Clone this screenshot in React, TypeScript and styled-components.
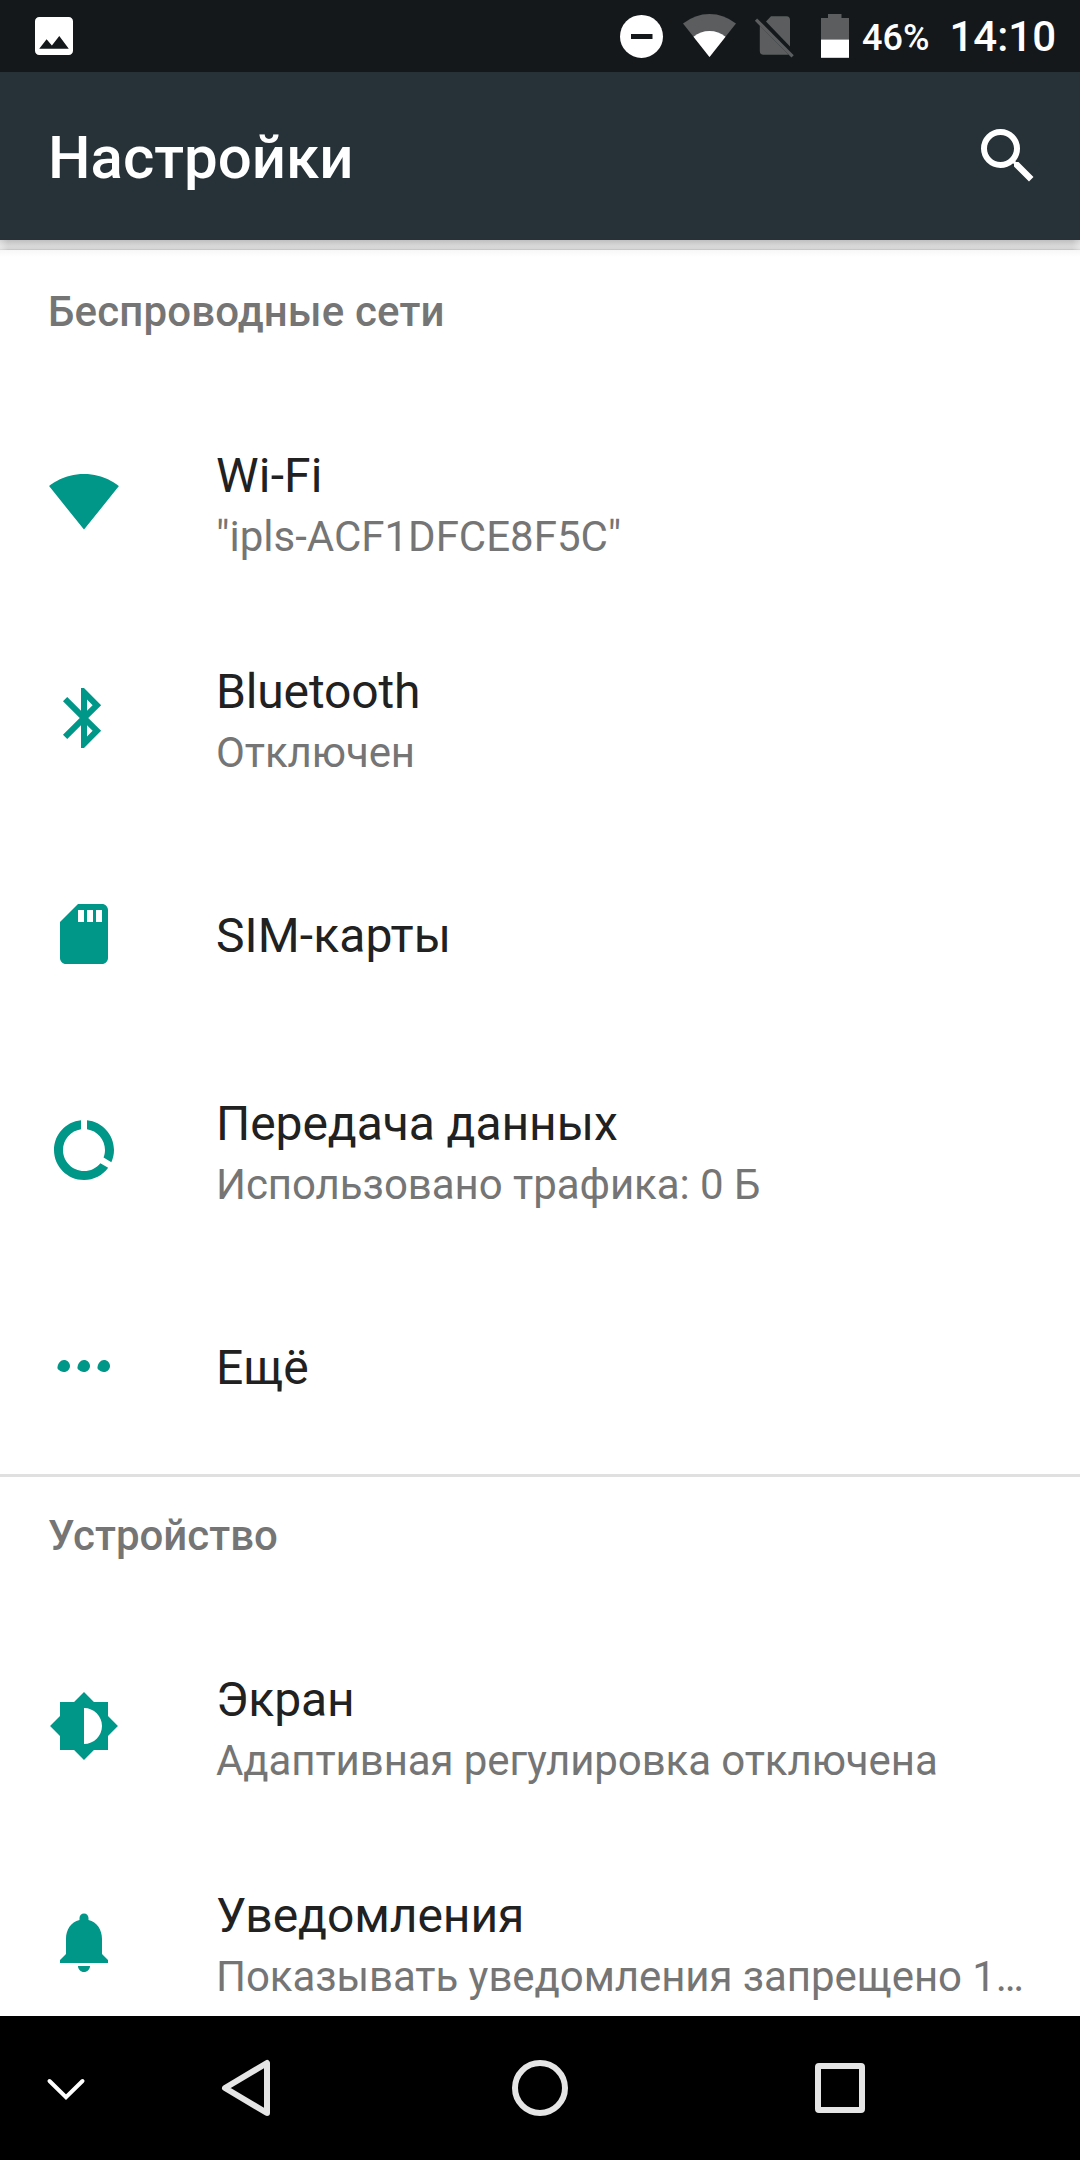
import React from 'react';
import styled, { createGlobalStyle } from 'styled-components';

const GlobalStyle = createGlobalStyle`
  * { box-sizing: border-box; }
  body {
    margin: 0;
    background: #ffffff;
    font-family: Roboto, "Noto Sans", sans-serif;
    -webkit-font-smoothing: antialiased;
  }
  svg { display: block; flex: none; }
  h1, h2, p { margin: 0; font-weight: 400; }
`;

const Screen = styled.div`
  display: flex;
  flex-direction: column;
  width: 1080px;
  height: 2160px;
  overflow: hidden;
  background: #ffffff;
`;

const StatusBar = styled.header`
  display: flex;
  flex: none;
  align-items: center;
  justify-content: space-between;
  height: 72px;
  padding: 0 24px 0 35px;
  background: #14181b;
  color: #ffffff;
`;

const StatusIcons = styled.div`
  display: flex;
  align-items: center;
  height: 72px;
`;

const BatteryLevel = styled.span`
  margin-left: 12px;
  padding-top: 3px;
  font-size: 36px;
  font-weight: 500;
  line-height: 42px;
`;

const Clock = styled.span`
  margin-left: 20px;
  padding-top: 2px;
  font-size: 42px;
  font-weight: 500;
  line-height: 50px;
`;

const Toolbar = styled.div`
  display: flex;
  flex: none;
  align-items: center;
  justify-content: space-between;
  height: 168px;
  padding: 0 36px 0 48px;
  background: #273238;
`;

const ToolbarTitle = styled.h1`
  padding-top: 3px;
  color: #ffffff;
  font-size: 60px;
  font-weight: 500;
  line-height: 70px;
`;

const ShadowStrip = styled.div`
  flex: none;
  height: 10px;
  background:
    linear-gradient(90deg, rgba(255, 255, 255, 0.35), transparent 8px calc(100% - 8px), rgba(255, 255, 255, 0.35)),
    linear-gradient(#c0c0c0, #cdcdcd 30%, #d8d8d8 60%, #d6d6d6 85%, #c0c0c0);
`;

const Content = styled.main`
  flex: 1;
  min-height: 0;
  overflow: hidden;
  background: linear-gradient(#f7f7f7, #ffffff 7px);
`;

const Section = styled.section<{ $divided?: boolean }>`
  box-shadow: ${(p) => (p.$divided ? 'inset 0 3px 0 #e0e0e0' : 'none')};
`;

const SectionTitle = styled.h2<{ $tracking: number }>`
  height: 144px;
  padding: 37px 48px 0;
  color: #757575;
  font-size: 42px;
  font-weight: 500;
  line-height: 49px;
  letter-spacing: ${(p) => p.$tracking}px;
`;

const Row = styled.div`
  display: flex;
  align-items: center;
  height: 216px;
  padding: 0 48px;
`;

const RowText = styled.div<{ $twoLine: boolean }>`
  display: flex;
  flex: 1;
  flex-direction: column;
  gap: 8px;
  min-width: 0;
  margin-left: 96px;
  padding-top: ${(p) => (p.$twoLine ? 5 : 3)}px;
`;

const RowTitle = styled.p<{ $tracking: number }>`
  color: #212121;
  font-size: 48px;
  line-height: 56px;
  letter-spacing: ${(p) => p.$tracking}px;
`;

const RowSummary = styled.p<{ $tracking: number }>`
  overflow: hidden;
  color: #757575;
  font-size: 42px;
  line-height: 49px;
  letter-spacing: ${(p) => p.$tracking}px;
  text-overflow: ellipsis;
  white-space: nowrap;
`;

const NavBar = styled.nav`
  display: flex;
  flex: none;
  align-items: center;
  height: 144px;
  padding-left: 36px;
  background: #000000;
`;

const NavButton = styled.div<{ $gap: number }>`
  display: flex;
  margin-left: ${(p) => p.$gap}px;
`;

const ICONS = {
  wifi: 'M12.01 21.2L23.64 6.7c-.45-.34-4.93-4-11.64-4C5.28 2.7.81 6.36.36 6.7l11.63 14.49.01.01.01-.01z',
  bluetooth:
    'M17.71 7.71L12 2h-1v7.59L6.41 5 5 6.41 10.59 12 5 17.59 6.41 19 11 14.41V22h1l5.71-5.71-4.3-4.29 4.3-4.29zM13 5.83l1.88 1.88L13 9.59V5.83zm1.88 10.46L13 18.17v-3.76l1.88 1.88z',
  sim: 'M18 2h-8L4 8v12c0 1.1.9 2 2 2h12c1.1 0 2-.9 2-2V4c0-1.1-.9-2-2-2zm-6 6h-2V4h2v4zm3 0h-2V4h2v4zm3 0h-2V4h2v4z',
  data: 'M13 2.05v3.03c3.39.49 6 3.39 6 6.92 0 .9-.18 1.75-.48 2.54l2.6 1.53c.56-1.24.88-2.62.88-4.07 0-5.18-3.95-9.45-9-9.95zM12 19c-3.87 0-7-3.13-7-7 0-3.53 2.61-6.43 6-6.92V2.05c-5.06.5-9 4.76-9 9.95 0 5.52 4.47 10 9.99 10 3.31 0 6.24-1.61 8.06-4.09l-2.6-1.53C16.17 17.98 14.21 19 12 19z',
  more: 'M5.3 10c1.15 0 2.03.9 2.03 2s-.88 2-2.03 2c-.8 0-1.3-.3-1.6-.65-.55-.2-.65-.75-.5-1.2.25-1.05 1-2.15 2.1-2.15zm6.67 0c1.15 0 2.03.9 2.03 2s-.88 2-2.03 2c-.8 0-1.3-.3-1.6-.65-.55-.2-.65-.75-.5-1.2.25-1.05 1-2.15 2.1-2.15zm6.67 0c1.15 0 2.03.9 2.03 2s-.88 2-2.03 2c-.8 0-1.3-.3-1.6-.65-.55-.2-.65-.75-.5-1.2.25-1.05 1-2.15 2.1-2.15z',
  display:
    'M20 15.31L23.31 12 20 8.69V4h-4.69L12 .69 8.69 4H4v4.69L.69 12 4 15.31V20h4.69L12 23.31 15.31 20H20v-4.69zM12 18V6c3.31 0 6 2.69 6 6s-2.69 6-6 6z',
  bell: 'M12 22c1.1 0 2-.9 2-2h-4c0 1.1.89 2 2 2zm6-6v-5c0-3.07-1.64-5.64-4.5-6.32V4c0-.83-.67-1.5-1.5-1.5s-1.5.67-1.5 1.5v.68C7.63 5.36 6 7.92 6 11v5l-2 2v1h16v-1l-2-2z',
  search:
    'M15.5 14h-.79l-.28-.27A6.471 6.471 0 0 0 16 9.5 6.5 6.5 0 1 0 9.5 16c1.61 0 3.09-.59 4.23-1.57l.27.28v.79l5 4.99L20.49 19l-4.99-5zm-6 0C7.01 14 5 11.99 5 9.5S7.01 5 9.5 5 14 7.01 14 9.5 11.99 14 9.5 14z',
  image:
    'M21 19V5c0-1.1-.9-2-2-2H5c-1.1 0-2 .9-2 2v14c0 1.1.9 2 2 2h14c1.1 0 2-.9 2-2zM8.5 13.5l2.5 3.01L14.5 12l4.5 6H5l3.5-4.5z',
};

type IconName = keyof typeof ICONS;

type IconProps = { name: IconName; size?: number; color?: string; viewBox?: string };

function Icon({ name, size = 72, color = '#009688', viewBox = '0 0 24 24' }: IconProps) {
  return (
    <svg width={size} height={size} viewBox={viewBox} fill={color}>
      <path d={ICONS[name]} />
    </svg>
  );
}

/* Right-hand status glyphs, drawn on the 72px-high bar. */
function StatusGlyphs() {
  return (
    <svg width="230" height="72" viewBox="620 0 230 72">
      <circle cx="641.5" cy="36.4" r="21.5" fill="#ffffff" />
      <rect x="631" y="34" width="21.5" height="5" fill="#14181b" />
      <path d="M709.5 57L683 23.6Q695 14 709.5 14T736 23.6Z" fill="#5b5d5f" />
      <path d="M709.5 57L693.5 36.8Q700.5 31 709.5 31T725.5 36.8Z" fill="#ffffff" />
      <path d="M766 21.4L771 16.2H786.5Q790 16.2 790 20V46.4Z" fill="#5b5d5f" />
      <path d="M759.8 25.6L788.5 54.5Q787.8 54.8 786 54.8H763.5Q759.8 54.8 759.8 51Z" fill="#5b5d5f" />
      <path d="M756 19.6L792.6 56.3" stroke="#5b5d5f" strokeWidth="3.2" />
      <path d="M821 18H828V14H841.5V18H849V39.5H821Z" fill="#5b5d5f" />
      <rect x="821" y="39.5" width="28" height="18.3" fill="#ffffff" />
    </svg>
  );
}

type Item = {
  icon: IconName;
  title: string;
  titleTracking?: number;
  summary?: string;
  summaryTracking?: number;
};

const SECTIONS: { title: string; tracking: number; items: Item[] }[] = [
  {
    title: 'Беспроводные сети',
    tracking: 0.16,
    items: [
      { icon: 'wifi', title: 'Wi-Fi', titleTracking: 0.2, summary: '"ipls-ACF1DFCE8F5C"', summaryTracking: 0 },
      { icon: 'bluetooth', title: 'Bluetooth', titleTracking: -0.14, summary: 'Отключен' },
      { icon: 'sim', title: 'SIM-карты', titleTracking: 0.1 },
      { icon: 'data', title: 'Передача данных', summary: 'Использовано трафика: 0 Б', summaryTracking: -0.05 },
      { icon: 'more', title: 'Ещё' },
    ],
  },
  {
    title: 'Устройство',
    tracking: 0,
    items: [
      { icon: 'display', title: 'Экран', summary: 'Адаптивная регулировка отключена' },
      { icon: 'bell', title: 'Уведомления', summary: 'Показывать уведомления запрещено 1…', summaryTracking: -0.07 },
    ],
  },
];

export default function App() {
  return (
    <>
      <GlobalStyle />
      <Screen>
        <StatusBar>
          <Icon name="image" size={38} color="#ffffff" viewBox="3 3 18 18" />
          <StatusIcons>
            <StatusGlyphs />
            <BatteryLevel>46%</BatteryLevel>
            <Clock>14:10</Clock>
          </StatusIcons>
        </StatusBar>
        <Toolbar>
          <ToolbarTitle>Настройки</ToolbarTitle>
          <Icon name="search" color="#ffffff" />
        </Toolbar>
        <ShadowStrip />
        <Content>
          {SECTIONS.map((section, index) => (
            <Section key={section.title} $divided={index > 0}>
              <SectionTitle $tracking={section.tracking}>{section.title}</SectionTitle>
              {section.items.map((item) => (
                <Row key={item.title}>
                  <Icon name={item.icon} />
                  <RowText $twoLine={Boolean(item.summary)}>
                    <RowTitle $tracking={item.titleTracking ?? -0.08}>{item.title}</RowTitle>
                    {item.summary && (
                      <RowSummary $tracking={item.summaryTracking ?? -0.09}>{item.summary}</RowSummary>
                    )}
                  </RowText>
                </Row>
              ))}
            </Section>
          ))}
        </Content>
        <NavBar>
          <NavButton $gap={0}>
            <svg width="60" height="60" viewBox="36 2058 60 60">
              <path d="M49.5 2081L66 2097.2L82.5 2081" fill="none" stroke="#ffffff" strokeWidth="4" strokeLinecap="round" />
            </svg>
          </NavButton>
          <NavButton $gap={120}>
            <svg width="60" height="60" viewBox="216 2058 60 60">
              <path d="M267 2063V2113L225 2088Z" fill="none" stroke="#e5e5e5" strokeWidth="6" strokeLinejoin="round" />
            </svg>
          </NavButton>
          <NavButton $gap={234}>
            <svg width="60" height="60" viewBox="510 2058 60 60">
              <circle cx="540" cy="2088" r="25" fill="none" stroke="#e5e5e5" strokeWidth="6" />
            </svg>
          </NavButton>
          <NavButton $gap={240}>
            <svg width="60" height="60" viewBox="810 2058 60 60">
              <rect x="818" y="2066" width="44" height="44" rx="1" fill="none" stroke="#e5e5e5" strokeWidth="6" strokeLinejoin="round" />
            </svg>
          </NavButton>
        </NavBar>
      </Screen>
    </>
  );
}
